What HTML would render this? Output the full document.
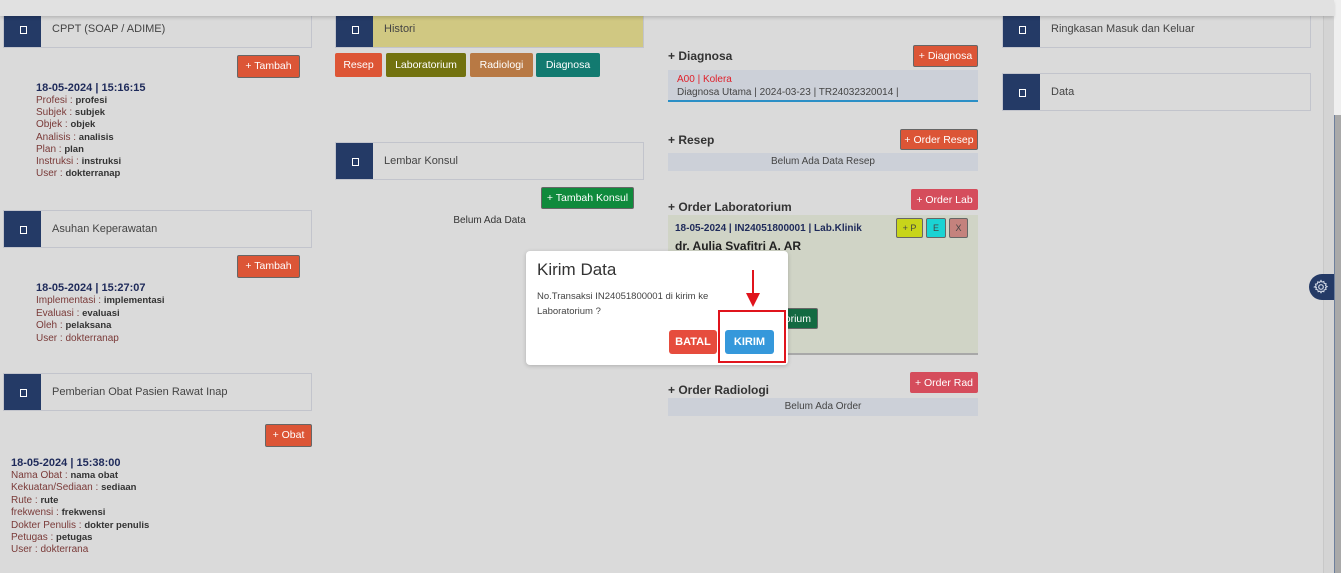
<!DOCTYPE html>
<html><head><meta charset="utf-8"><style>
*{margin:0;padding:0;box-sizing:border-box}
body{width:1341px;height:573px;overflow:hidden;background:#dadada;font-family:"Liberation Sans",sans-serif;position:relative;color:#333}
.a{position:absolute}
.card{position:absolute;border:1px solid #c2c4cc;background:#dadada;height:38px}
.card .sq{position:absolute;left:0;top:0;bottom:0;width:37px;background:#243a66}
.card .sq:after{content:"";position:absolute;left:16px;top:15px;width:5px;height:6px;border:1.5px solid #fff}
.card .t{position:absolute;left:48px;top:0;line-height:36px;font-size:11px;color:#444}
.btn{position:absolute;color:#fff;font-size:10.5px;text-align:center;border-radius:2px;border:1px solid #666;line-height:20px}
.red{background:#dc5536}
.info{position:absolute;font-size:10px;line-height:12.2px;color:#7a3a38}
.info b{color:#333;font-weight:bold;font-size:9.5px}
.info .h{color:#1e2a5a;font-weight:bold;font-size:11px;line-height:14px}
.sec{position:absolute;font-size:12px;font-weight:bold;color:#333}
.empty{position:absolute;background:#ccd0d8;font-size:10px;color:#444;text-align:center;line-height:18px}
.pink{background:#d54d5c;border-color:#d54d5c}
</style></head><body>
<div class="a" style="left:0;top:0;width:1334px;height:16px;background:#e1e1e1;box-shadow:0 2px 3px rgba(0,0,0,.15);z-index:2"></div>
<div class="a" style="left:1323px;top:16px;width:11px;height:557px;background:#d4d4d4;border-left:1px solid #c8c8c8"></div>
<div class="a" style="left:1334px;top:0;width:7px;height:115px;background:#efefef"></div>
<div class="a" style="left:1334px;top:115px;width:7px;height:458px;background:#a9a9a9;border-left:1px solid #6d7f9c"></div>
<div class="a" style="left:1309px;top:274px;width:25px;height:26px;background:#243a66;border-radius:13px 0 0 13px"></div>
<svg class="a" style="left:1313px;top:279px" width="16" height="16" viewBox="0 0 16 16"><circle cx="8" cy="8" r="2.3" fill="none" stroke="#cfd6e4" stroke-width="1.2"/><path d="M8 1.5l1 1.6 1.8-.6.4 1.9 1.9.4-.6 1.8 1.6 1-1.6 1 .6 1.8-1.9.4-.4 1.9-1.8-.6-1 1.6-1-1.6-1.8.6-.4-1.9-1.9-.4.6-1.8L1.5 8l1.6-1-.6-1.8 1.9-.4.4-1.9 1.8.6z" fill="none" stroke="#cfd6e4" stroke-width="1.1"/></svg>

<div class="card" style="left:3px;top:10px;width:309px"><div class="sq"></div><div class="t">CPPT (SOAP / ADIME)</div></div>
<div class="btn red" style="left:237px;top:55px;width:63px;height:23px">+ Tambah</div>
<div class="info" style="left:36px;top:81px"><div class="h">18-05-2024 | 15:16:15</div>Profesi : <b>profesi</b><br>Subjek : <b>subjek</b><br>Objek : <b>objek</b><br>Analisis : <b>analisis</b><br>Plan : <b>plan</b><br>Instruksi : <b>instruksi</b><br>User : <b>dokterranap</b></div>
<div class="card" style="left:3px;top:210px;width:309px"><div class="sq"></div><div class="t">Asuhan Keperawatan</div></div>
<div class="btn red" style="left:237px;top:255px;width:63px;height:23px">+ Tambah</div>
<div class="info" style="left:36px;top:281px;line-height:12.6px"><div class="h">18-05-2024 | 15:27:07</div>Implementasi : <b>implementasi</b><br>Evaluasi : <b>evaluasi</b><br>Oleh : <b>pelaksana</b><br>User : dokterranap</div>
<div class="card" style="left:3px;top:373px;width:309px"><div class="sq"></div><div class="t">Pemberian Obat Pasien Rawat Inap</div></div>
<div class="btn red" style="left:265px;top:424px;width:47px;height:23px">+ Obat</div>
<div class="info" style="left:11px;top:456px;line-height:12.4px"><div class="h">18-05-2024 | 15:38:00</div>Nama Obat : <b>nama obat</b><br>Kekuatan/Sediaan : <b>sediaan</b><br>Rute : <b>rute</b><br>frekwensi : <b>frekwensi</b><br>Dokter Penulis : <b>dokter penulis</b><br>Petugas : <b>petugas</b><br>User : dokterrana</div>

<div class="card" style="left:335px;top:10px;width:309px;background:#d0c882"><div class="sq"></div><div class="t">Histori</div></div>
<div class="btn" style="left:335px;top:53px;width:47px;height:24px;background:#dd5535;border:none;line-height:24px">Resep</div>
<div class="btn" style="left:386px;top:53px;width:80px;height:24px;background:#72720f;border:none;line-height:24px">Laboratorium</div>
<div class="btn" style="left:470px;top:53px;width:63px;height:24px;background:#b87944;border:none;line-height:24px">Radiologi</div>
<div class="btn" style="left:536px;top:53px;width:64px;height:24px;background:#127a70;border:none;line-height:24px">Diagnosa</div>
<div class="card" style="left:335px;top:142px;width:309px"><div class="sq"></div><div class="t">Lembar Konsul</div></div>
<div class="btn" style="left:541px;top:187px;width:93px;height:22px;background:#0f8a3c">+ Tambah Konsul</div>
<div class="a" style="left:335px;top:215px;width:309px;text-align:center;font-size:10px;color:#333">Belum Ada Data</div>

<div class="sec" style="left:668px;top:49px">+ Diagnosa</div>
<div class="btn red" style="left:913px;top:45px;width:65px;height:22px">+ Diagnosa</div>
<div class="a" style="left:668px;top:70px;width:310px;height:32px;background:#ccd0d8;border-bottom:2px solid #2b8fc6;font-size:10px;padding:4px 0 0 9px;line-height:12.5px;color:#444"><span style="color:#e0202a">A00 | Kolera</span><br>Diagnosa Utama | 2024-03-23 | TR24032320014 |</div>
<div class="sec" style="left:668px;top:133px">+ Resep</div>
<div class="btn red" style="left:900px;top:129px;width:78px;height:21px">+ Order Resep</div>
<div class="empty" style="left:668px;top:153px;width:310px;height:18px">Belum Ada Data Resep</div>
<div class="sec" style="left:668px;top:200px">+ Order Laboratorium</div>
<div class="btn pink" style="left:911px;top:189px;width:67px;height:21px">+ Order Lab</div>
<div class="a" style="left:668px;top:215px;width:310px;height:140px;background:#d0d4c6;border-bottom:2px solid #a8a8a8"></div>
<div class="a" style="left:675px;top:223px;font-size:10px;font-weight:bold;color:#1e2a5a">18-05-2024 | IN24051800001 | Lab.Klinik</div>
<div class="a" style="left:675px;top:239px;font-size:12px;font-weight:bold;color:#222">dr. Aulia Svafitri A. AR</div>
<div class="btn" style="left:896px;top:218px;width:27px;height:20px;background:#c8d41a;color:#444;font-size:9px;line-height:18px">+ P</div>
<div class="btn" style="left:926px;top:218px;width:20px;height:20px;background:#1ad3d3;color:#444;font-size:9px;line-height:18px">E</div>
<div class="btn" style="left:949px;top:218px;width:19px;height:20px;background:#c4827d;color:#444;font-size:9px;line-height:18px">X</div>
<div class="btn" style="left:760px;top:308px;width:58px;height:21px;background:#136a42;text-align:right;padding-right:6px">orium</div>
<div class="sec" style="left:668px;top:383px">+ Order Radiologi</div>
<div class="btn pink" style="left:910px;top:372px;width:68px;height:21px">+ Order Rad</div>
<div class="empty" style="left:668px;top:398px;width:310px;height:18px">Belum Ada Order</div>

<div class="card" style="left:1002px;top:10px;width:309px"><div class="sq"></div><div class="t">Ringkasan Masuk dan Keluar</div></div>
<div class="card" style="left:1002px;top:73px;width:309px"><div class="sq"></div><div class="t">Data</div></div>

<div class="a" style="left:526px;top:251px;width:262px;height:114px;background:#fff;border-radius:4px;box-shadow:0 1px 4px rgba(0,0,0,.2)">
<div class="a" style="left:11px;top:9px;font-size:17px;color:#333">Kirim Data</div>
<div class="a" style="left:11px;top:38px;font-size:9.5px;line-height:15px;color:#444;width:210px">No.Transaksi IN24051800001 di kirim ke Laboratorium ?</div>
<div class="a" style="left:143px;top:79px;width:48px;height:24px;background:#e64c3d;border-radius:3px;color:#fff;font-weight:bold;font-size:11px;text-align:center;line-height:24px">BATAL</div>
<div class="a" style="left:199px;top:79px;width:49px;height:24px;background:#3598db;border-radius:3px;color:#fff;font-weight:bold;font-size:11px;text-align:center;line-height:24px">KIRIM</div>
</div>
<div class="a" style="left:718px;top:310px;width:68px;height:53px;border:2px solid #e0141c"></div>
<div class="a" style="left:752px;top:270px;width:2px;height:24px;background:#e0141c"></div>
<div class="a" style="left:746px;top:293px;width:0;height:0;border-left:7px solid transparent;border-right:7px solid transparent;border-top:14px solid #e0141c"></div>
</body></html>
